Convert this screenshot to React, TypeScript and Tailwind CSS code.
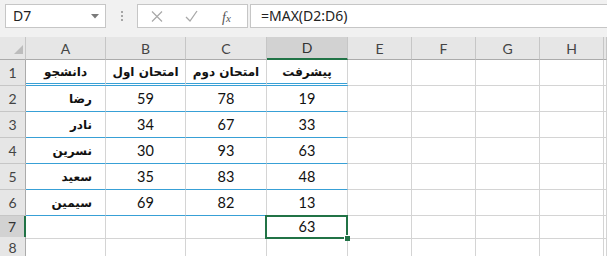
import React from "react";

const rows = [
  { n: 1, a: "دانشجو", b: "امتحان اول", c: "امتحان دوم", d: "پیشرفت" },
  { n: 2, a: "رضا", b: "59", c: "78", d: "19" },
  { n: 3, a: "نادر", b: "34", c: "67", d: "33" },
  { n: 4, a: "نسرین", b: "30", c: "93", d: "63" },
  { n: 5, a: "سعید", b: "35", c: "83", d: "48" },
  { n: 6, a: "سیمین", b: "69", c: "82", d: "13" },
];

const colLetters = ["A", "B", "C", "D", "E", "F", "G", "H", ""];

const grid =
  "grid grid-cols-[26px_80px_80px_81px_81px_64px_64px_64px_64px_1fr]";

function Toolbar() {
  return (
    <div className="h-[37px] bg-[#f1f1f1] flex items-start pt-[4px] pl-[5px]">
      {/* name box */}
      <div className="w-[101px] h-[24px] bg-white border border-[#c6c6c6] flex items-center pl-[7px] pr-[6px]">
        <span className="text-[14px] text-[#222] font-['Noto_Sans',sans-serif] flex-1 leading-none">
          D7
        </span>
        <svg width="8" height="5" viewBox="0 0 8 5">
          <path d="M0 0 L8 0 L4 4.5 Z" fill="#7a7a7a" />
        </svg>
      </div>
      {/* grip dots */}
      <div className="w-[31px] h-[24px] flex flex-col items-center justify-center gap-[2px]">
        <span className="w-[2px] h-[2px] bg-[#a6a6a6]" />
        <span className="w-[2px] h-[2px] bg-[#a6a6a6]" />
        <span className="w-[2px] h-[2px] bg-[#a6a6a6]" />
      </div>
      {/* cancel / enter / fx */}
      <div className="w-[111px] h-[24px] bg-white border border-[#c6c6c6] relative">
        <svg className="absolute left-[13px] top-[6px]" width="12" height="11" viewBox="0 0 12 11">
          <path d="M1 0.5 L11 10.5 M11 0.5 L1 10.5" stroke="#a8a8a8" strokeWidth="1.2" fill="none" />
        </svg>
        <svg className="absolute left-[47px] top-[5px]" width="13" height="12" viewBox="0 0 13 12">
          <path d="M1 7 L5 11 L12 1" stroke="#a8a8a8" strokeWidth="1.3" fill="none" />
        </svg>
        <span className="absolute left-[84px] top-[2px] text-[14px] italic text-[#555] font-['Liberation_Serif',serif]">
          f<span className="text-[11px]">x</span>
        </span>
      </div>
      {/* formula */}
      <div className="flex-1 ml-[2px] h-[24px] bg-white border-y border-l border-[#c6c6c6] flex items-center pl-[10px]">
        <span className="text-[14px] text-[#222] font-['Noto_Sans',sans-serif] leading-none">
          =MAX(D2:D6)
        </span>
      </div>
    </div>
  );
}

function HeaderRow() {
  return (
    <div className={`${grid} h-[23px]`}>
      <div className="bg-[#e6e6e6] border-r border-b border-r-[#c6c6c6] border-b-[#ababab] relative">
        <svg className="absolute left-[14px] top-[8px]" width="9" height="9" viewBox="0 0 9 9">
          <path d="M9 0 L9 9 L0 9 Z" fill="#bcbcbc" />
        </svg>
      </div>
      {colLetters.map((l, i) =>
        l === "D" ? (
          <div
            key={i}
            className="bg-[#d2d2d2] border-r border-r-[#c6c6c6] border-b-2 border-b-[#217346] flex items-center justify-center text-[14px] text-[#333]"
          >
            {l}
          </div>
        ) : (
          <div
            key={i}
            className="bg-[#e6e6e6] border-r border-b border-r-[#c6c6c6] border-b-[#ababab] flex items-center justify-center text-[14px] text-[#444]"
          >
            {l}
          </div>
        )
      )}
    </div>
  );
}

function RowHead({ n, selected }: { n: number; selected?: boolean }) {
  if (selected) {
    return (
      <div className="bg-[#d2d2d2] border-r-2 border-r-[#217346] border-b border-b-[#c6c6c6] flex items-center justify-center text-[14px] text-[#333]">
        {n}
      </div>
    );
  }
  return (
    <div className="bg-[#e6e6e6] border-r border-b border-r-[#ababab] border-b-[#c6c6c6] flex items-center justify-center text-[14px] text-[#444]">
      {n}
    </div>
  );
}

function DataRow({ r }: { r: (typeof rows)[number] }) {
  const first = r.n === 1;
  const cell = first
    ? "border-r border-r-[#d4d4d4] border-b-[3px] border-double border-b-[#38a0d6] flex items-center justify-center"
    : "border-r border-r-[#d4d4d4] border-b border-b-[#38a0d6] flex items-center justify-center";
  const arabic = "font-['DejaVu_Sans',sans-serif] font-bold text-[12px] text-[#111]";
  return (
    <div className={`${grid} h-[26px]`}>
      <RowHead n={r.n} />
      <div className={first ? cell : `${cell} !justify-end pr-[13px]`}>
        <span dir="rtl" className={arabic}>
          {r.a}
        </span>
      </div>
      {[r.b, r.c, r.d].map((v, i) => (
        <div key={i} className={cell}>
          {first ? (
            <span dir="rtl" className={arabic}>
              {v}
            </span>
          ) : (
            <span className="text-[14.5px] text-[#111]">{v}</span>
          )}
        </div>
      ))}
      {[0, 1, 2, 3, 4].map((i) => (
        <div key={i} className="border-r border-b border-[#d4d4d4]" />
      ))}
    </div>
  );
}

function BlankRow({ n, h, selected }: { n: number; h: string; selected?: boolean }) {
  return (
    <div className={`${grid} ${h}`}>
      <RowHead n={n} selected={selected} />
      {[0, 1, 2, 3, 4, 5, 6, 7, 8].map((i) => (
        <div
          key={i}
          className="border-r border-b border-[#d4d4d4] relative flex items-center justify-center"
        >
          {selected && i === 3 && (
            <>
              <span className="text-[14.5px] text-[#111]">63</span>
              <div className="absolute -left-[2px] -top-[1px] -right-[1px] -bottom-[1px] border-2 border-[#217346] z-10">
                <div className="absolute -right-[4px] -bottom-[4px] w-[6px] h-[6px] bg-[#217346] border-l border-t border-white" />
              </div>
            </>
          )}
        </div>
      ))}
    </div>
  );
}

export default function App() {
  return (
    <div className="w-[607px] h-[256px] overflow-hidden bg-white font-['Lato',sans-serif]">
      <Toolbar />
      <HeaderRow />
      {rows.map((r) => (
        <DataRow key={r.n} r={r} />
      ))}
      <BlankRow n={7} h="h-[21px]" selected />
      <BlankRow n={8} h="h-[21px]" />
    </div>
  );
}
